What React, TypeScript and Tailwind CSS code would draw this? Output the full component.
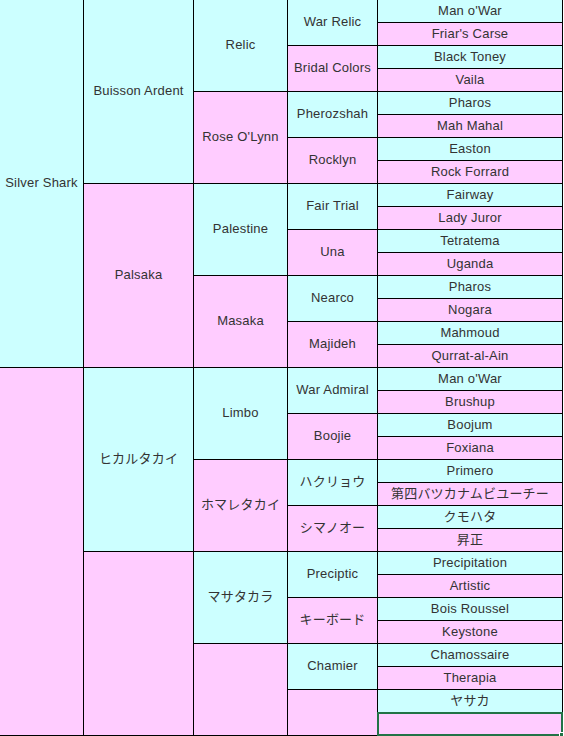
import React from "react";

type Cell = { col: number; row: number; span: number; text: string; pink: boolean; sel?: boolean };

const col1: [string, boolean][] = [["Silver Shark", false], ["", true]];
const col2: [string, boolean][] = [
  ["Buisson Ardent", false],
  ["Palsaka", true],
  ["ヒカルタカイ", false],
  ["", true],
];
const col3: [string, boolean][] = [
  ["Relic", false],
  ["Rose O'Lynn", true],
  ["Palestine", false],
  ["Masaka", true],
  ["Limbo", false],
  ["ホマレタカイ", true],
  ["マサタカラ", false],
  ["", true],
];
const col4Names = [
  "War Relic",
  "Bridal Colors",
  "Pherozshah",
  "Rocklyn",
  "Fair Trial",
  "Una",
  "Nearco",
  "Majideh",
  "War Admiral",
  "Boojie",
  "ハクリョウ",
  "シマノオー",
  "Preciptic",
  "キーボード",
  "Chamier",
  "",
];
const col5Names = [
  "Man o'War",
  "Friar's Carse",
  "Black Toney",
  "Vaila",
  "Pharos",
  "Mah Mahal",
  "Easton",
  "Rock Forrard",
  "Fairway",
  "Lady Juror",
  "Tetratema",
  "Uganda",
  "Pharos",
  "Nogara",
  "Mahmoud",
  "Qurrat-al-Ain",
  "Man o'War",
  "Brushup",
  "Boojum",
  "Foxiana",
  "Primero",
  "第四バツカナムビユーチー",
  "クモハタ",
  "昇正",
  "Precipitation",
  "Artistic",
  "Bois Roussel",
  "Keystone",
  "Chamossaire",
  "Therapia",
  "ヤサカ",
  "",
];

const cells: Cell[] = [];
col1.forEach(([t, p], i) => cells.push({ col: 1, row: i * 16 + 1, span: 16, text: t, pink: p }));
col2.forEach(([t, p], i) => cells.push({ col: 2, row: i * 8 + 1, span: 8, text: t, pink: p }));
col3.forEach(([t, p], i) => cells.push({ col: 3, row: i * 4 + 1, span: 4, text: t, pink: p }));
col4Names.forEach((t, i) => cells.push({ col: 4, row: i * 2 + 1, span: 2, text: t, pink: i % 2 === 1 }));
col5Names.forEach((t, i) =>
  cells.push({ col: 5, row: i + 1, span: 1, text: t, pink: i % 2 === 1, sel: i === 31 })
);

export default function App() {
  return (
    <div
      className="w-[564px] h-[736px] bg-white overflow-hidden text-[13px] text-[#333]"
      style={{ fontFamily: '"Liberation Sans", Arial, "Noto Sans CJK JP", sans-serif' }}
    >
      <div className="grid grid-cols-[84px_110px_94px_90px_185px] grid-rows-[repeat(32,23px)]">
        {cells.map((c, i) => (
          <div
            key={i}
            className={
              "relative flex items-center justify-center border-r border-b border-black whitespace-nowrap leading-none " +
              (c.pink ? "bg-[#ffccff]" : "bg-[#ccffff]")
            }
            style={{ gridColumn: `${c.col}`, gridRow: `${c.row} / span ${c.span}` }}
          >
            <span className="tracking-[0.2px] -mt-[2px]">{c.text}</span>
            {c.sel && (
              <>
                <div className="absolute -left-px -top-px -right-px -bottom-px border-2 border-[#217346]" />
                <div className="absolute -right-[2px] -bottom-[2px] w-[5px] h-[5px] bg-[#217346] border border-white" />
              </>
            )}
          </div>
        ))}
      </div>
    </div>
  );
}
